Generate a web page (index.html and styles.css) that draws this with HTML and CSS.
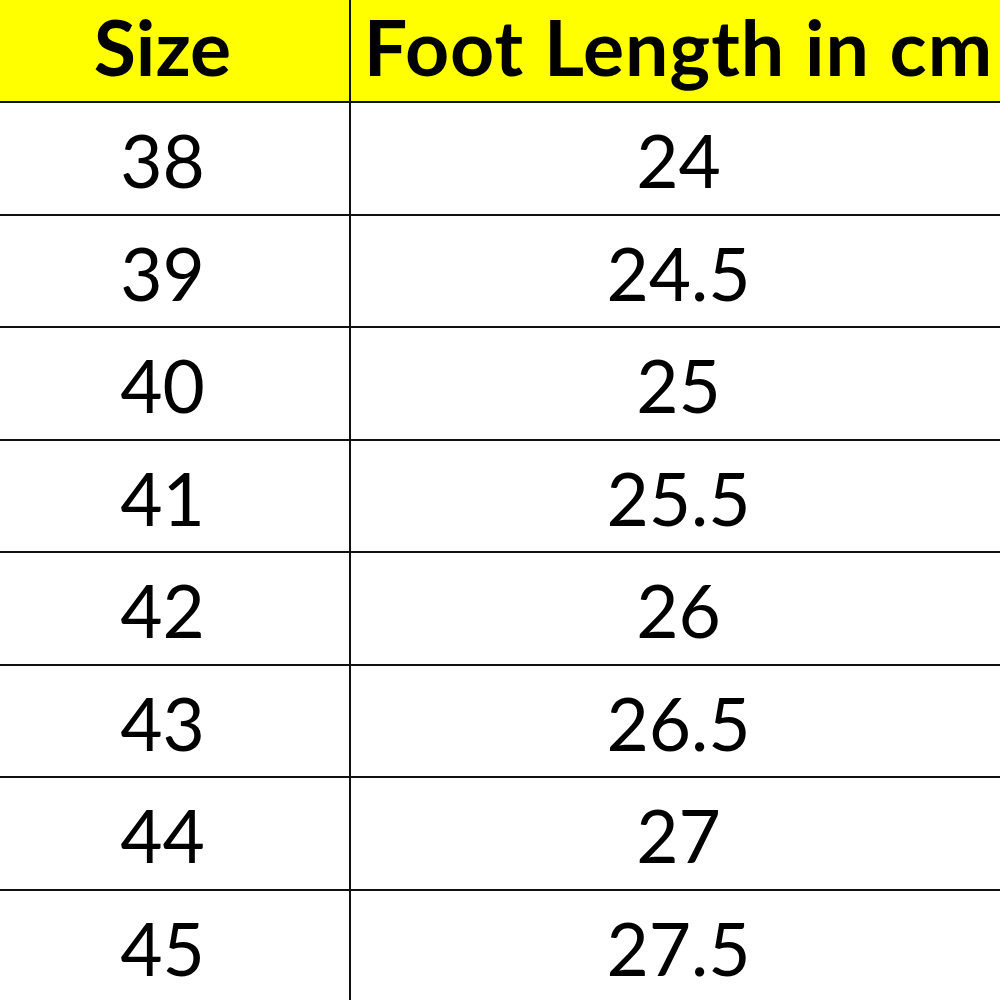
FILE: index.html
```html
<!DOCTYPE html>
<html>
<head>
<meta charset="utf-8">
<link rel="stylesheet" href="styles.css">
</head>
<body>
<div class="sheet">
  <div class="cell head c1">Size</div>
  <div class="cell head c2 wide">Foot Length in cm</div>
  <div class="cell c1">38</div><div class="cell c2">24</div>
  <div class="cell c1">39</div><div class="cell c2">24.5</div>
  <div class="cell c1">40</div><div class="cell c2">25</div>
  <div class="cell c1">41</div><div class="cell c2">25.5</div>
  <div class="cell c1">42</div><div class="cell c2">26</div>
  <div class="cell c1">43</div><div class="cell c2">26.5</div>
  <div class="cell c1">44</div><div class="cell c2">27</div>
  <div class="cell c1">45</div><div class="cell c2">27.5</div>
</div>
</body>
</html>
```
FILE: styles.css
```css
html, body {
  margin: 0;
  padding: 0;
  background: #fff;
  overflow: hidden;
}
.sheet {
  display: grid;
  grid-template-columns: 375px 655px;
  grid-template-rows: 103px;
  grid-auto-rows: 112.5px;
  margin-left: -24px;
  font-family: "Lato", "Open Sans", sans-serif;
  color: #000;
}
.cell {
  box-sizing: border-box;
  border-bottom: 2px solid #111;
  display: flex;
  align-items: center;
  justify-content: center;
  font-size: 73px;
  padding-top: 4px;
}
.c1 {
  border-right: 2px solid #111;
}
.head {
  background: #ffff00;
  font-weight: 700;
  font-size: 77px;
  padding-top: 0;
  padding-bottom: 10px;
}
.wide {
  letter-spacing: 1px;
}
```
